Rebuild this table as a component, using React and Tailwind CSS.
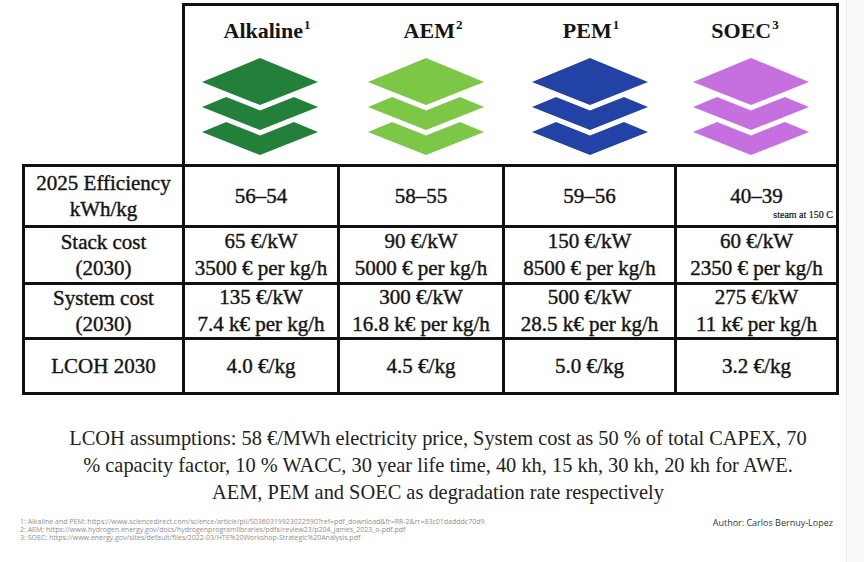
import React from "react";

const techs = [
  { name: "Alkaline", note: "1", color: "#23803a", shift: "ml-[14px]" },
  { name: "AEM", note: "2", color: "#7cc846", shift: "ml-[14px]" },
  { name: "PEM", note: "1", color: "#2242a5", shift: "ml-[2px]" },
  { name: "SOEC", note: "3", color: "#c670e0", shift: "mr-[12px]" },
];

const rows = [
  {
    label: ["2025 Efficiency", "kWh/kg"],
    h: "h-[58px]",
    cells: [["56–54"], ["58–55"], ["59–56"], ["40–39"]],
  },
  {
    label: ["Stack cost", "(2030)"],
    h: "h-[54px]",
    cells: [
      ["65 €/kW", "3500 € per kg/h"],
      ["90 €/kW", "5000 € per kg/h"],
      ["150 €/kW", "8500 € per kg/h"],
      ["60 €/kW", "2350 € per kg/h"],
    ],
  },
  {
    label: ["System cost", "(2030)"],
    h: "h-[52px]",
    cells: [
      ["135 €/kW", "7.4 k€ per kg/h"],
      ["300 €/kW", "16.8 k€ per kg/h"],
      ["500 €/kW", "28.5 k€ per kg/h"],
      ["275 €/kW", "11 k€ per kg/h"],
    ],
  },
  {
    label: ["LCOH 2030"],
    h: "h-[52px]",
    cells: [["4.0 €/kg"], ["4.5 €/kg"], ["5.0 €/kg"], ["3.2 €/kg"]],
  },
];

const diamond = (y) => `58,${y} 116,${y + 24} 58,${y + 47} 0,${y + 24}`;

const Layers = ({ color }) => (
  <svg width="116" height="98" viewBox="0 0 116 98">
    <polygon points={diamond(50)} fill={color} />
    <polygon points={diamond(25)} fill={color} stroke="#fff" strokeWidth="10" paintOrder="stroke" />
    <polygon points={diamond(0)} fill={color} stroke="#fff" strokeWidth="10" paintOrder="stroke" />
  </svg>
);

const cols = "grid grid-cols-[157px_152px_162px_169px_159px] gap-[3px]";
const headCols = "grid grid-cols-[150px_176px_146px_170px] gap-[3px]";

export default function App() {
  return (
    <div className="flex w-[864px] h-[562px] bg-white overflow-hidden">
      <div className="w-[846px] shrink-0 flex flex-col text-[#151515] font-['Liberation_Serif','Times_New_Roman',serif]">
        {/* header with electrolyser types */}
        <div className="ml-[182px] mt-[3px] w-[657px] h-[161px] border-[3px] border-b-0 border-[#111]">
          <div className={headCols}>
            {techs.map((t) => (
              <div key={t.name} className="flex flex-col items-center pt-[14px]">
                <div className={`text-[22px] leading-none font-bold ${t.shift}`}>
                  {t.name}
                  <span className="relative -top-[9px] ml-[1px] text-[13px]">{t.note}</span>
                </div>
                <div className="mt-[16px]">
                  <Layers color={t.color} />
                </div>
              </div>
            ))}
          </div>
        </div>

        {/* data table */}
        <div className={`ml-[22px] w-[817px] bg-[#111] p-[3px] ${cols} [-webkit-text-stroke:0.4px_#151515]`}>
          {rows.map((r, i) => (
            <React.Fragment key={i}>
              <div className={`${r.h} bg-white flex flex-col items-center justify-center text-[21px] leading-[26px]`}>
                {r.label.map((l) => (
                  <span key={l}>{l}</span>
                ))}
              </div>
              {r.cells.map((c, j) => (
                <div
                  key={j}
                  className={`${r.h} relative bg-white flex flex-col items-center justify-center text-[21px] leading-[27px]`}
                >
                  {c.map((l) => (
                    <span key={l} className="whitespace-nowrap">{l}</span>
                  ))}
                  {i === 0 && j === 3 && (
                    <span className="absolute right-[3px] bottom-[5px] text-[10px] leading-none [-webkit-text-stroke:0.2px_#151515]">
                      steam at 150 C
                    </span>
                  )}
                </div>
              ))}
            </React.Fragment>
          ))}
        </div>

        {/* assumptions */}
        <p className="mt-[30px] pl-[30px] text-center text-[20.4px] leading-[27px] text-[#222]">
          LCOH assumptions: 58 €/MWh electricity price, System cost as 50 % of total CAPEX, 70
          <br />
          % capacity factor, 10 % WACC, 30 year life time, 40 kh, 15 kh, 30 kh, 20 kh for AWE.
          <br />
          AEM, PEM and SOEC as degradation rate respectively
        </p>

        <div className="mt-[12px] flex justify-between items-start pl-[20px] pr-[13px] font-['Open_Sans','Liberation_Sans',sans-serif]">
          <div className="text-[7px] leading-[8px] text-[#8f8f8f]">
            <div>1: Alkaline and PEM: https://www.sciencedirect.com/science/article/pii/S0360319923022590?ref=pdf_download&fr=RR-2&rr=83c01dadddc70d9</div>
            <div>2: AEM: https://www.hydrogen.energy.gov/docs/hydrogenprogramlibraries/pdfs/review23/p204_james_2023_o-pdf.pdf</div>
            <div>3: SOEC: https://www.energy.gov/sites/default/files/2022-03/HTE%20Workshop-Strategic%20Analysis.pdf</div>
          </div>
          <div className="text-[9px] leading-[12px] text-[#333] -mt-[1px]">Author: Carlos Bernuy-Lopez</div>
        </div>
      </div>
      <div className="flex-1 border-l border-[#ececec] bg-[#fafafa]" />
    </div>
  );
}
